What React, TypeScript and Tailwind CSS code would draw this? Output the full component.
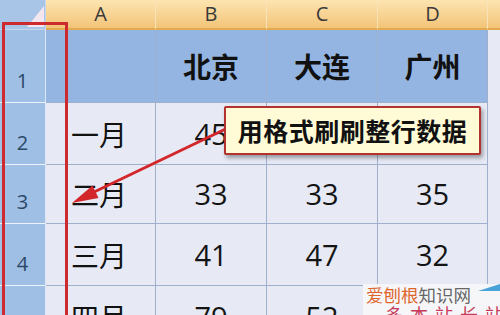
import React from "react";

const cjk = '"Noto Sans CJK SC", "Noto Sans", sans-serif';
const num = '"Open Sans", "Liberation Sans", sans-serif';

const cols = ["A", "B", "C", "D"];
const rows: { label: string; cells: string[] }[] = [
  { label: "1", cells: ["", "北京", "大连", "广州"] },
  { label: "2", cells: ["一月", "45", "30", "36"] },
  { label: "3", cells: ["二月", "33", "33", "35"] },
  { label: "4", cells: ["三月", "41", "47", "32"] },
  { label: "5", cells: ["四月", "79", "52", "40"] },
];

export default function App() {
  return (
    <div className="relative w-[500px] h-[315px] overflow-hidden bg-[#e6eaf4]">
      <div className="grid grid-cols-[46px_110px_111px_111px_110px_12px] grid-rows-[30px_73px_62px_59px_62px_62px]">
        {/* corner */}
        <div className="relative bg-[#a8c4e7] border-r border-b border-[#c6d8ee]">
          <svg className="absolute left-0 top-0" width="46" height="30">
            <polygon points="44,6 44,27 27,27" fill="#f4e6ee" />
          </svg>
        </div>
        {cols.map((c) => (
          <div
            key={c}
            className="flex items-center justify-center bg-gradient-to-b from-[#fce4b0] to-[#f3c478] border-r border-[#f8e2b8] border-b-2 border-b-[#e3a94e] text-[20px] text-[#3a3a3a]"
            style={{ fontFamily: num }}
          >
            {c}
          </div>
        ))}
        <div className="bg-gradient-to-b from-[#fce4b0] to-[#f3c478] border-b-2 border-b-[#e3a94e]" />

        {rows.map((r, ri) => (
          <React.Fragment key={r.label}>
            <div
              className="flex items-end justify-center pb-[6px] bg-[#a0bfe4] border-r border-[#dce8f6] border-b border-b-[#eef4fb] text-[20px] text-[#2a4868]"
              style={{ fontFamily: num }}
            >
              {r.label}
            </div>
            {r.cells.map((v, ci) => (
              <div
                key={ci}
                className={
                  "flex items-center border-r border-b border-[#9fb0cc] " +
                  (ri === 0 ? "bg-[#94b5e1] " : "bg-[#e7eaf5] ") +
                  (ci === 0 ? "justify-start pl-[25px] " : "justify-center ") +
                  (ri === 0 ? "font-bold text-[28px] text-[#111]" : ci === 0 ? "text-[28px] text-[#111]" : "text-[29px] text-[#141414]")
                }
                style={{ fontFamily: ci === 0 || ri === 0 ? cjk : num }}
              >
                {v}
              </div>
            ))}
            <div className="bg-[#e7eaf4]" />
          </React.Fragment>
        ))}
      </div>

      {/* red selection frame around row headers */}
      <div className="absolute left-[2px] top-[22px] w-[66px] h-[320px] border-[3px] border-[#cc2a2e]" />

      {/* arrow */}
      <svg className="absolute left-0 top-0" width="500" height="315">
        <line x1="236" y1="124" x2="92" y2="193" stroke="#d3262b" strokeWidth="3" />
        <polygon points="72,203 98.5,198 92.5,185.5" fill="#d3262b" />
      </svg>

      {/* callout */}
      <div
        className="absolute left-[224px] top-[106px] w-[257px] h-[49px] flex items-center justify-center bg-[#fffbd6] border-2 border-[#b3322f] rounded-[2px] shadow-[2px_3px_4px_rgba(0,0,0,0.35)] font-bold text-[25px] tracking-[0.5px] text-[#111]"
        style={{ fontFamily: cjk }}
      >
        用格式刷刷整行数据
      </div>

      {/* watermark */}
      <div className="absolute left-[363px] top-[284px] w-[137px] h-[31px] bg-[#f6f6f9]">
        <svg className="absolute right-0 top-0" width="24" height="8">
          <polygon points="2,7 24,0 24,7" fill="#4aa3d8" />
        </svg>
        <div className="absolute left-[3px] top-[1px] text-[17.5px] leading-[20px] whitespace-nowrap" style={{ fontFamily: cjk }}>
          <span className="text-[#e0652b]">爱刨根</span>
          <span className="text-[#666]">知识网</span>
        </div>
        <div
          className="absolute left-[22px] top-[20px] text-[18px] leading-[20px] tracking-[7px] whitespace-nowrap text-[#c83a5a]"
          style={{ fontFamily: '"Noto Sans CJK SC", serif' }}
        >
          多本站长站
        </div>
      </div>
    </div>
  );
}
